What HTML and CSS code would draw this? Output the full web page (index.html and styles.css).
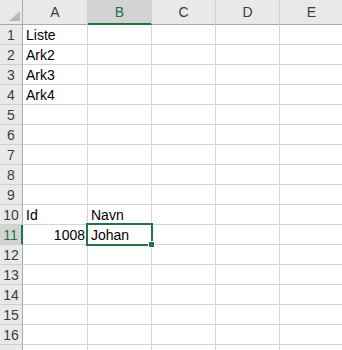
FILE: index.html
```html
<!DOCTYPE html>
<html>
<head>
<meta charset="UTF-8">
<title>Ark1</title>
<link rel="stylesheet" href="styles.css">
</head>
<body>
<div class="sheet">
<div class="grid">
<div class="corner"><svg width="22" height="24" viewBox="0 0 22 24"><polygon points="20,11 20,21 9,21" fill="#b8b8b8"/></svg></div>
<div class="colhead">A</div>
<div class="colhead sel">B</div>
<div class="colhead">C</div>
<div class="colhead">D</div>
<div class="colhead">E</div>

<div class="rowhead">1</div><div class="cell">Liste</div><div class="cell"></div><div class="cell"></div><div class="cell"></div><div class="cell"></div>
<div class="rowhead">2</div><div class="cell">Ark2</div><div class="cell"></div><div class="cell"></div><div class="cell"></div><div class="cell"></div>
<div class="rowhead">3</div><div class="cell">Ark3</div><div class="cell"></div><div class="cell"></div><div class="cell"></div><div class="cell"></div>
<div class="rowhead">4</div><div class="cell">Ark4</div><div class="cell"></div><div class="cell"></div><div class="cell"></div><div class="cell"></div>
<div class="rowhead">5</div><div class="cell"></div><div class="cell"></div><div class="cell"></div><div class="cell"></div><div class="cell"></div>
<div class="rowhead">6</div><div class="cell"></div><div class="cell"></div><div class="cell"></div><div class="cell"></div><div class="cell"></div>
<div class="rowhead">7</div><div class="cell"></div><div class="cell"></div><div class="cell"></div><div class="cell"></div><div class="cell"></div>
<div class="rowhead">8</div><div class="cell"></div><div class="cell"></div><div class="cell"></div><div class="cell"></div><div class="cell"></div>
<div class="rowhead">9</div><div class="cell"></div><div class="cell"></div><div class="cell"></div><div class="cell"></div><div class="cell"></div>
<div class="rowhead">10</div><div class="cell">Id</div><div class="cell">Navn</div><div class="cell"></div><div class="cell"></div><div class="cell"></div>
<div class="rowhead sel">11</div><div class="cell num">1008</div><div class="cell">Johan</div><div class="cell"></div><div class="cell"></div><div class="cell"></div>
<div class="rowhead">12</div><div class="cell"></div><div class="cell"></div><div class="cell"></div><div class="cell"></div><div class="cell"></div>
<div class="rowhead">13</div><div class="cell"></div><div class="cell"></div><div class="cell"></div><div class="cell"></div><div class="cell"></div>
<div class="rowhead">14</div><div class="cell"></div><div class="cell"></div><div class="cell"></div><div class="cell"></div><div class="cell"></div>
<div class="rowhead">15</div><div class="cell"></div><div class="cell"></div><div class="cell"></div><div class="cell"></div><div class="cell"></div>
<div class="rowhead">16</div><div class="cell"></div><div class="cell"></div><div class="cell"></div><div class="cell"></div><div class="cell"></div>
<div class="rowhead"></div><div class="cell"></div><div class="cell"></div><div class="cell"></div><div class="cell"></div><div class="cell"></div>
</div>
<div class="selection"><span class="handle"></span></div>
</div>
</body>
</html>
```

FILE: styles.css
```css
html, body {
	margin: 0;
	padding: 0;
	background-color: #fff;
	overflow: hidden;
}

body {
	font-family: "Liberation Sans", Arial, sans-serif;
	font-size: 14px;
	color: #000;
}

.sheet {
	position: relative;
	width: 342px;
	height: 350px;
	overflow: hidden;
}

.grid {
	display: grid;
	grid-template-columns: 23px 65px 64px 64px 64px 64px;
	grid-template-rows: 25px repeat(17, 20px);
}

.grid > div {
	box-sizing: border-box;
	overflow: hidden;
	white-space: nowrap;
}

.corner {
	background-color: #e9e9e9;
	border-right: 1px solid #ababab;
	border-bottom: 1px solid #ababab;
}

.corner svg {
	display: block;
}

.colhead {
	background-color: #e9e9e9;
	border-right: 1px solid #d0d0d0;
	border-bottom: 1px solid #ababab;
	text-align: center;
	font-size: 14px;
	line-height: 24px;
	color: #3c3c3c;
}

.colhead.sel {
	background-color: #d3d3d3;
	color: #217346;
	border-bottom: 2px solid #217346;
}

.rowhead {
	background-color: #e9e9e9;
	border-right: 1px solid #ababab;
	border-bottom: 1px solid #d0d0d0;
	text-align: center;
	font-size: 14px;
	line-height: 20px;
	color: #3c3c3c;
}

.rowhead.sel {
	background-color: #d3d3d3;
	color: #217346;
	border-right: 2px solid #217346;
}

.cell {
	border-right: 1px solid #d4d4d4;
	border-bottom: 1px solid #d4d4d4;
	padding: 0 2px 0 3px;
	line-height: 21px;
}

.cell.num {
	text-align: right;
}

.selection {
	position: absolute;
	left: 86px;
	top: 223px;
	width: 67px;
	height: 23px;
	box-sizing: border-box;
	border: 2px solid #217346;
}

.handle {
	position: absolute;
	right: -4px;
	bottom: -4px;
	width: 5px;
	height: 5px;
	background-color: #217346;
	border: 1px solid #fff;
}
```
